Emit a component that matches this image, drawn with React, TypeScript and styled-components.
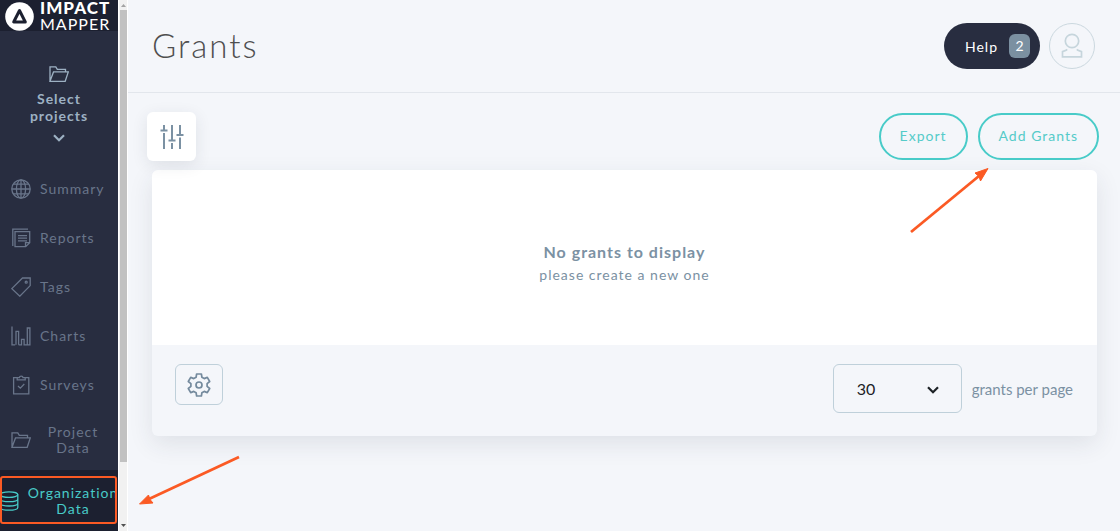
import React from "react";
import styled, { createGlobalStyle } from "styled-components";

const GlobalStyle = createGlobalStyle`
  *, *::before, *::after { box-sizing: border-box; }
  body {
    margin: 0;
    background: #f4f6fa;
    font-family: Lato, "Open Sans", sans-serif;
    font-size: 14px;
    letter-spacing: 1px;
    color: #7b91a3;
  }
  button, select { font: inherit; letter-spacing: inherit; cursor: pointer; }
`;

const Page = styled.div`
  display: flex;
  height: 100vh;
  overflow: hidden;
`;

const Sidebar = styled.aside`
  flex: none;
  width: 118px;
  background: #282d40;
  overflow: hidden;
`;

const Brand = styled.a`
  display: flex;
  align-items: center;
  gap: 6px;
  height: 31px;
  padding-left: 5px;
  background: #1c2030;
  color: #fff;
  text-decoration: none;
`;

const BrandName = styled.span`
  display: flex;
  flex-direction: column;
  font-size: 16px;
  line-height: 16px;
  strong { font-size: 17px; font-weight: 900; }
`;

const ProjectPicker = styled.button`
  display: flex;
  flex-direction: column;
  align-items: center;
  width: 100%;
  height: 133px;
  padding: 33px 20px 0;
  border: 0;
  background: none;
  color: #9db1c3;
  font-weight: 700;
  line-height: 17px;
  svg:first-child { margin-bottom: 6px; }
  svg:last-child { margin-top: 10px; }
`;

const NavItem = styled.a<{ $active?: boolean; $tall?: boolean }>`
  position: relative;
  display: flex;
  align-items: center;
  justify-content: center;
  gap: 9px;
  height: ${(p) => (p.$tall ? 61 : 49)}px;
  padding: 0 12px 0 11px;
  background: ${(p) => (p.$active ? "#1c2030" : "none")};
  color: ${(p) => (p.$active ? "#48cbc8" : "#69758a")};
  line-height: 16px;
  text-decoration: none;
  text-align: ${(p) => (p.$tall ? "center" : "left")};
  svg { flex: none; }
  span { flex: 1; }
`;

const Highlight = styled.i`
  position: absolute;
  inset: 6px 1px 7px 0;
  border: 2px solid #fb5a24;
  border-radius: 3px;
`;

const ScrollTrack = styled.div`
  flex: none;
  display: flex;
  flex-direction: column;
  align-items: center;
  width: 10px;
  padding: 3px 0;
  background: #f1f1f1;
  border-left: 1px solid #fff;
  border-right: 1px solid #fff;
`;

const ScrollThumb = styled.div`
  width: 7px;
  height: 86%;
  margin: 3px 0 auto;
  background: #c1c1c1;
`;

const Main = styled.main`
  position: relative;
  flex: 1;
  min-width: 0;
`;

const Header = styled.header`
  display: flex;
  align-items: center;
  gap: 9px;
  height: 93px;
  padding: 0 25px 0 24px;
  border-bottom: 1px solid #e2e6ec;
`;

const Title = styled.h1`
  flex: 1;
  margin: 0;
  padding-bottom: 2px;
  font-size: 33px;
  font-weight: 300;
  line-height: 40px;
  letter-spacing: 2px;
  color: #4f4f4f;
`;

const HelpButton = styled.button`
  display: flex;
  align-items: center;
  justify-content: space-between;
  width: 96px;
  height: 46px;
  padding: 0 10px 0 21px;
  border: 0;
  border-radius: 23px;
  background: #282d40;
  color: #fff;
`;

const Count = styled.span`
  width: 21px;
  border-radius: 6px;
  background: #7b90a1;
  line-height: 24px;
  text-align: center;
  letter-spacing: 0;
`;

const AvatarButton = styled.button`
  display: grid;
  place-items: center;
  width: 46px;
  height: 46px;
  padding: 0;
  border: 1px solid #cbd8df;
  border-radius: 50%;
  background: none;
  color: #c6d5dc;
`;

const Toolbar = styled.div`
  display: flex;
  align-items: center;
  gap: 10px;
  padding: 19px 21px 9px 19px;
`;

const FilterButton = styled.button`
  display: grid;
  place-items: center;
  width: 49px;
  height: 49px;
  margin-right: auto;
  padding: 0;
  border: 0;
  border-radius: 6px;
  background: #fff;
  box-shadow: 0 4px 16px rgba(40, 45, 64, 0.1);
  color: #7b91a3;
`;

const PillButton = styled.button`
  height: 47px;
  padding: 0 19px 2px;
  border: 2px solid #48cbc8;
  border-radius: 24px;
  background: none;
  color: #55cbc9;
`;

const PillAnchor = styled.div`
  position: relative;
`;

const Card = styled.section`
  margin: 0 23px 0 24px;
  border-radius: 6px;
  background: #f4f6fa;
  box-shadow: 0 8px 24px rgba(40, 45, 64, 0.1);
`;

const EmptyState = styled.div`
  padding: 70px 24px 59px;
  border-radius: 6px 6px 0 0;
  background: #fff;
  text-align: center;
  line-height: 22px;
`;

const EmptyTitle = styled.h2`
  margin: 0;
  font-size: 16px;
  font-weight: 700;
  line-height: 24px;
`;

const EmptyHint = styled.p`
  margin: 0;
`;

const CardFooter = styled.footer`
  display: flex;
  align-items: flex-start;
  justify-content: space-between;
  padding: 19px 24px 23px 23px;
`;

const SettingsButton = styled.button`
  display: grid;
  place-items: center;
  width: 48px;
  height: 41px;
  padding: 0;
  border: 1px solid #bfd0da;
  border-radius: 6px;
  background: none;
  color: #748a9d;
`;

const PageSize = styled.label`
  display: flex;
  align-items: center;
  gap: 10px;
  letter-spacing: 0;
  font-size: 15px;
`;

const SelectBox = styled.span`
  position: relative;
  display: flex;
  svg { position: absolute; right: 23px; top: 22px; pointer-events: none; }
`;

const Select = styled.select`
  appearance: none;
  width: 129px;
  height: 49px;
  padding: 0 23px;
  border: 1px solid #bfd0da;
  border-radius: 6px;
  background: none;
  color: #1d2226;
  font-size: 16px;
`;

const Arrow = styled.svg<{ $place: "button" | "nav" }>`
  position: absolute;
  pointer-events: none;
  ${(p) => (p.$place === "button" ? "right: 110px; top: 54px;" : "left: 10px; bottom: 25px;")}
`;

const Icon = ({ children, size = 20 }: { children: React.ReactNode; size?: number }) => (
  <svg width={size} height={size} viewBox="0 0 20 20" fill="none" stroke="currentColor" strokeWidth="1.3" aria-hidden="true">
    {children}
  </svg>
);

const Chevron = ({ color = "currentColor" }: { color?: string }) => (
  <svg width="12" height="8" viewBox="0 0 12 8" fill="none" stroke={color} strokeWidth="2.2" aria-hidden="true">
    <path d="M1 1.2 6 6.2l5-5" />
  </svg>
);

const folder = <path d="M1 17.3V2.8h5.8l1.5 2.5h8.2v2.6M1 17.3 4.5 7.9H19.3L16.2 17.3H1Z" />;

const items: { label: string; icon: React.ReactNode; tall?: boolean; active?: boolean }[] = [
  {
    label: "Summary",
    icon: (
      <>
        <circle cx="10" cy="10" r="9.2" />
        <ellipse cx="10" cy="10" rx="4.6" ry="9.2" />
        <path d="M10 .8v18.4M.8 10h18.4M2.6 5.2h14.8M2.6 14.8h14.8" />
      </>
    ),
  },
  {
    label: "Reports",
    icon: (
      <>
        <path d="M1.800 18V1.200H17" />
        <path d="M4 3.700h14.700v11l-4 4H4zM18.500 14.600h-4v4M7 7.600h9M7 10.200h9M7 12.800h9" />
      </>
    ),
  },
  {
    label: "Tags",
    icon: (
      <>
        <path d="M.8 11.6 11.5 1h7.7v7.6L8.8 19.2z" />
        <circle cx="15.2" cy="5.2" r="1" />
      </>
    ),
  },
  {
    label: "Charts",
    icon: <path d="M1 .5v18.3h3.2M5 18.8V5.3h2.6v13.5M7.6 18.8h2.9v-5.4h2.6v5.4h3.2V2h2.6v16.8h-2.6" />,
  },
  {
    label: "Surveys",
    icon: (
      <>
        <path d="M6.2 2.7H2.6v16.2h15.2V2.7h-3.6" />
        <path d="M6.2 4.8V2.7h2.2C8.4.5 12 .5 12 2.7h2.2v2.1zM7 11l2.3 2.2 4-4.2" />
      </>
    ),
  },
  { label: "Project Data", tall: true, icon: folder },
  {
    label: "Organization Data",
    tall: true,
    active: true,
    icon: (
      <>
        <ellipse cx="10" cy="3.6" rx="8.8" ry="2.8" />
        <path d="M18.8 3.6v12.8c0 3.7-17.6 3.7-17.6 0V3.6M1.2 7.9c0 3.7 17.6 3.7 17.6 0M1.2 12.2c0 3.7 17.6 3.7 17.6 0" />
      </>
    ),
  },
];

export default function App() {
  return (
    <>
      <GlobalStyle />
      <Page>
        <Sidebar>
          <Brand href="#" aria-label="Impact Mapper">
            <svg width="29" height="31" viewBox="0 0 29 31" aria-hidden="true">
              <circle cx="14.500" cy="16.500" r="14.300" fill="#fff" />
              <path d="M14.500 10.500 8.700 22h11.600z" fill="none" stroke="#1c2030" strokeWidth="3" strokeLinejoin="round" />
            </svg>
            <BrandName>
              <strong>IMPACT</strong>
              <span>MAPPER</span>
            </BrandName>
          </Brand>
          <ProjectPicker>
            <Icon>{folder}</Icon>
            Select projects
            <Chevron />
          </ProjectPicker>
          <nav>
            {items.map((item) => (
              <NavItem key={item.label} href="#" $tall={item.tall} $active={item.active}>
                <Icon>{item.icon}</Icon>
                <span>{item.label}</span>
                {item.active && <Highlight />}
              </NavItem>
            ))}
          </nav>
        </Sidebar>
        <ScrollTrack aria-hidden="true">
          <svg width="5" height="4" viewBox="0 0 5 4"><path d="M0 4 2.5 1 5 4z" fill="#a3a3a3" /></svg>
          <ScrollThumb />
          <svg width="5" height="4" viewBox="0 0 5 4"><path d="M0 0 2.5 3 5 0z" fill="#505050" /></svg>
        </ScrollTrack>
        <Main>
          <Header>
            <Title>Grants</Title>
            <HelpButton>
              Help <Count>2</Count>
            </HelpButton>
            <AvatarButton aria-label="Account">
              <svg width="22" height="26" viewBox="0 0 22 26" fill="none" stroke="currentColor" strokeWidth="1.7" aria-hidden="true">
                <circle cx="11" cy="8" r="6.700" />
                <path d="M6 16.200 5.500 17 1.500 18.600v5.200h19v-5.200l-4-1.600-.5-.8" />
              </svg>
            </AvatarButton>
          </Header>
          <Toolbar>
            <FilterButton aria-label="Filters">
              <svg width="24" height="24" viewBox="0 0 24 24" fill="none" stroke="currentColor" strokeWidth="2" aria-hidden="true">
                <path d="M4 0v5M.5 5.500h7M4 8v16M12 0v15M8.500 15.500h7M12 18v6M20 0v9.500M16.500 10h7M20 12.500V24" />
              </svg>
            </FilterButton>
            <PillButton>Export</PillButton>
            <PillAnchor>
              <PillButton>Add Grants</PillButton>
              <Arrow $place="button" width="80" height="68" viewBox="0 0 80 68" aria-hidden="true">
                <path d="M2 65 70 9" stroke="#fb5a24" strokeWidth="2.800" />
                <path d="M79 1.500 66 6 70 9.500 71.500 14z" fill="#fb5a24" stroke="#fb5a24" />
              </Arrow>
            </PillAnchor>
          </Toolbar>
          <Card>
            <EmptyState>
              <EmptyTitle>No grants to display</EmptyTitle>
              <EmptyHint>please create a new one</EmptyHint>
            </EmptyState>
            <CardFooter>
              <SettingsButton aria-label="Table settings">
                <svg width="24" height="24" viewBox="0 0 24 24" fill="none" stroke="currentColor" strokeWidth="1.700" strokeLinejoin="round" aria-hidden="true">
                  <circle cx="12" cy="12" r="3" />
                  <path d="M9.600 1h4.800l.5 3.300 2.300 1.300 3.100-1.200 2.400 4.100-2.600 2.100v2.800l2.600 2.100-2.400 4.100-3.100-1.200-2.300 1.300-.5 3.300H9.600l-.5-3.300-2.300-1.300-3.100 1.200-2.400-4.100 2.600-2.100v-2.800L1.300 8.500l2.400-4.100 3.100 1.200 2.300-1.300z" />
                </svg>
              </SettingsButton>
              <PageSize>
                <SelectBox>
                  <Select defaultValue="30">
                    <option>10</option>
                    <option>30</option>
                    <option>50</option>
                  </Select>
                  <Chevron color="#1d2226" />
                </SelectBox>
                grants per page
              </PageSize>
            </CardFooter>
          </Card>
          <Arrow $place="nav" width="104" height="52" viewBox="0 0 104 52" aria-hidden="true">
            <path d="M101 3 11 45" stroke="#fb5a24" strokeWidth="2.800" />
            <path d="M1.500 50 10.500 41 12 45.500 15 49z" fill="#fb5a24" stroke="#fb5a24" />
          </Arrow>
        </Main>
      </Page>
    </>
  );
}
